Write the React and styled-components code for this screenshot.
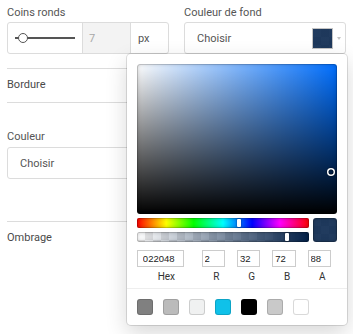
import React from "react";
import styled, { createGlobalStyle } from "styled-components";

const GlobalStyle = createGlobalStyle`
  html, body { margin: 0; padding: 0; background: #fff; }
  body { font-family: Roboto, "Liberation Sans", Arial, sans-serif; }
  * { box-sizing: border-box; }
`;

const Page = styled.div`
  position: relative;
  width: 353px;
  min-height: 334px;
  padding: 6px 7px 0 7px;
`;

const TopRow = styled.div`
  display: grid;
  grid-template-columns: 162px 162px;
  column-gap: 15px;
`;

const Field = styled.div`
  position: relative;
  display: flex;
  flex-direction: column;
  width: ${(p) => (p.$width ? `${p.$width}px` : "auto")};
`;

const Label = styled.div`
  font-size: 11px;
  line-height: 14px;
  color: #555;
  margin-bottom: ${(p) => p.$gap ?? 2}px;
`;

const InputGroup = styled.div`
  display: flex;
  height: 32px;
  border: 1px solid #dcdcdc;
  border-radius: 3px;
  overflow: hidden;
`;

const SliderCell = styled.div`
  width: 75px;
  display: flex;
  align-items: center;
  padding: 0 7px;
  border-right: 1px solid #dcdcdc;
`;

const Track = styled.div`
  position: relative;
  flex: 1;
  height: 2px;
  background: #555;
`;

const Thumb = styled.div`
  position: absolute;
  top: 50%;
  width: 10px;
  height: 10px;
  border-radius: 50%;
  background: #fff;
  border: 1px solid #555;
  transform: translate(-50%, -50%);
`;

const NumberCell = styled.div`
  width: 48px;
  background: #f3f3f3;
  border-right: 1px solid #dcdcdc;
  display: flex;
  align-items: center;
  padding-left: 6px;
  font-size: 11px;
  color: #a8a8a8;
`;

const UnitCell = styled.div`
  flex: 1;
  display: flex;
  align-items: center;
  padding-left: 7px;
  font-size: 11px;
  color: #555;
`;

const Select = styled.div`
  display: flex;
  align-items: center;
  height: 32px;
  border: 1px solid #dcdcdc;
  border-radius: 3px;
  padding: 0 4px 0 12px;
  font-size: 11px;
  color: #555;
`;

const SelectText = styled.span`
  flex: 1;
`;

const checker = `repeating-conic-gradient(rgba(0,0,0,0.09) 0 25%, #fff 0 50%) 0 0 / 16px 16px`;

const ColorChip = styled.div`
  width: 21px;
  height: 21px;
  border: 1px solid #c4c4c4;
  background: linear-gradient(rgba(2, 32, 72, 0.88), rgba(2, 32, 72, 0.88)), ${checker};
`;

const Caret = styled.span`
  width: 0;
  height: 0;
  margin-left: 4px;
  border-left: 2.5px solid transparent;
  border-right: 2.5px solid transparent;
  border-top: 3px solid #c4c4c4;
`;

const Divider = styled.div`
  height: 1px;
  background: #dcdcdc;
  margin-top: ${(p) => p.$top ?? 0}px;
`;

const SectionRow = styled.div`
  padding: 9px 0 10px;
  font-size: 11px;
  line-height: 14px;
  color: #4a4a4a;
`;

const Section = styled.div`
  padding-top: ${(p) => p.$top}px;
  padding-bottom: ${(p) => p.$bottom}px;
`;

/* ---------- colour picker popover ---------- */

const Popover = styled.div`
  position: absolute;
  z-index: 10;
  top: 100%;
  right: -1px;
  width: 220px;
  padding: 10px 10px 0;
  background: #fff;
  border-radius: 4px;
  box-shadow: 0 0 0 1px rgba(0, 0, 0, 0.12), 0 8px 22px rgba(0, 0, 0, 0.16);
  font-family: Roboto, "Liberation Sans", Arial, sans-serif;
`;

const Saturation = styled.div`
  position: relative;
  width: 200px;
  height: 150px;
  border-radius: 3px;
  background: linear-gradient(to top, #000, rgba(0, 0, 0, 0)),
    linear-gradient(to right, #fff, rgba(255, 255, 255, 0)), ${(p) => p.$hue};
  box-shadow: inset 0 0 0 1px rgba(0, 0, 0, 0.15), inset 0 0 4px rgba(0, 0, 0, 0.25);
`;

const SatPointer = styled.div`
  position: absolute;
  width: 5px;
  height: 5px;
  border-radius: 50%;
  transform: translate(-2.5px, -2.5px);
  box-shadow: 0 0 0 1.5px #fff, inset 0 0 1px 1px rgba(0, 0, 0, 0.3), 0 0 1px 2px rgba(0, 0, 0, 0.4);
`;

const Controls = styled.div`
  display: flex;
`;

const Sliders = styled.div`
  flex: 1;
  padding: 4px 0;
  display: flex;
  flex-direction: column;
  gap: 4px;
`;

const Bar = styled.div`
  position: relative;
  height: 10px;
  border-radius: 2px;
  background: ${(p) => p.$bg};
  box-shadow: inset 0 0 0 1px rgba(0, 0, 0, 0.15), inset 0 0 4px rgba(0, 0, 0, 0.25);
`;

const BarPointer = styled.div`
  position: absolute;
  top: 1px;
  width: 4px;
  height: 8px;
  border-radius: 1px;
  background: #fff;
  box-shadow: 0 0 2px rgba(0, 0, 0, 0.6);
  transform: translateX(-2px);
`;

const Preview = styled.div`
  width: 24px;
  height: 24px;
  margin: 4px 0 0 4px;
  border-radius: 3px;
  background: linear-gradient(rgba(2, 32, 72, 0.88), rgba(2, 32, 72, 0.88)), ${checker};
  box-shadow: inset 0 0 0 1px rgba(0, 0, 0, 0.15), inset 0 0 4px rgba(0, 0, 0, 0.25);
`;

const Fields = styled.div`
  display: flex;
  padding-top: 4px;
`;

const FieldCol = styled.div`
  flex: ${(p) => p.$flex} 1 0;
  padding-left: ${(p) => (p.$first ? 0 : 6)}px;
  min-width: 0;
`;

const FieldInput = styled.input`
  display: block;
  width: 80%;
  height: 17px;
  padding: 0 0 0 10%;
  border: none;
  outline: none;
  box-shadow: inset 0 0 0 1px #ccc;
  font-family: "Liberation Sans", Arial, sans-serif;
  font-size: 9.5px;
  color: #222;
  background: #fff;
`;

const FieldLabel = styled.span`
  display: block;
  text-align: center;
  font-size: 10px;
  line-height: 13px;
  color: #333;
  padding: 3px 0 5px;
`;

const Presets = styled.div`
  display: flex;
  flex-wrap: wrap;
  margin: 0 -10px;
  padding: 10px 0 0 10px;
  border-top: 1px solid #eee;
`;

const Swatch = styled.div`
  width: 16px;
  height: 16px;
  margin: 0 10px 10px 0;
  border-radius: 3px;
  background: ${(p) => p.$color};
  box-shadow: inset 0 0 0 1px rgba(0, 0, 0, 0.15);
`;

const presetColors = ["#808080", "#bbbbbb", "#f0f1f1", "#0fc1e9", "#000000", "#c9c9c9", "#ffffff"];

const fieldDefs = [
  { label: "Hex", value: "022048", flex: 2 },
  { label: "R", value: "2", flex: 1 },
  { label: "G", value: "32", flex: 1 },
  { label: "B", value: "72", flex: 1 },
  { label: "A", value: "88", flex: 1 },
];

const hueGradient =
  "linear-gradient(to right, #f00 0%, #ff0 17%, #0f0 33%, #0ff 50%, #00f 67%, #f0f 83%, #f00 100%)";
const alphaGradient = `linear-gradient(to right, rgba(2,32,72,0) 0%, rgb(2,32,72) 100%), ${checker}`;

function ColorPicker() {
  return (
    <Popover>
      <Saturation $hue="hsl(214, 100%, 50%)">
        <SatPointer style={{ left: "97.2%", top: "71.8%" }} />
      </Saturation>
      <Controls>
        <Sliders>
          <Bar $bg={hueGradient}>
            <BarPointer style={{ left: "59.5%" }} />
          </Bar>
          <Bar $bg={alphaGradient}>
            <BarPointer style={{ left: "87%" }} />
          </Bar>
        </Sliders>
        <Preview />
      </Controls>
      <Fields>
        {fieldDefs.map((f, i) => (
          <FieldCol key={f.label} $flex={f.flex} $first={i === 0}>
            <FieldInput defaultValue={f.value} />
            <FieldLabel>{f.label}</FieldLabel>
          </FieldCol>
        ))}
      </Fields>
      <Presets>
        {presetColors.map((c) => (
          <Swatch key={c} $color={c} />
        ))}
      </Presets>
    </Popover>
  );
}

export default function App() {
  return (
    <>
      <GlobalStyle />
      <Page>
        <TopRow>
          <Field>
            <Label>Coins ronds</Label>
            <InputGroup>
              <SliderCell>
                <Track>
                  <Thumb style={{ left: "14%" }} />
                </Track>
              </SliderCell>
              <NumberCell>7</NumberCell>
              <UnitCell>px</UnitCell>
            </InputGroup>
          </Field>
          <Field>
            <Label>Couleur de fond</Label>
            <Select>
              <SelectText>Choisir</SelectText>
              <ColorChip />
              <Caret />
            </Select>
            <ColorPicker />
          </Field>
        </TopRow>
        <Divider $top={14} />
        <SectionRow>Bordure</SectionRow>
        <Divider />
        <Section $top={27} $bottom={42}>
          <Field $width={162}>
            <Label $gap={3}>Couleur</Label>
            <Select>
              <SelectText>Choisir</SelectText>
            </Select>
          </Field>
        </Section>
        <Divider />
        <SectionRow>Ombrage</SectionRow>
      </Page>
    </>
  );
}
